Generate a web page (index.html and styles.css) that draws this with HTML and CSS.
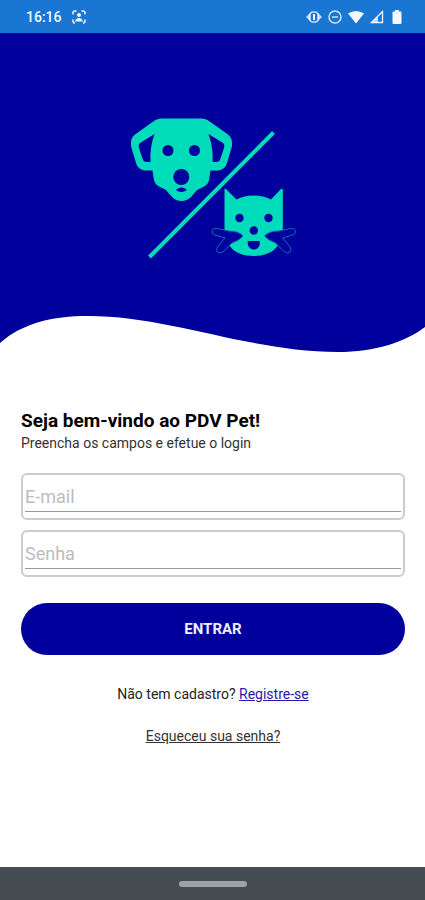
FILE: index.html
```html
<!DOCTYPE html>
<html lang="pt-BR">
<head>
  <meta charset="utf-8">
  <meta name="viewport" content="width=device-width, initial-scale=1">
  <title>PDV Pet</title>
  <link rel="stylesheet" href="styles.css">
</head>
<body>
  <div class="status-bar">
    <div class="status-left">
      <span>16:16</span>
      <svg width="14" height="14" viewBox="0 0 14 14" fill="none" stroke="currentColor" stroke-width="1.5">
        <path d="M1 4.500V3Q1 1 3 1h1.500M9.500 1H11q2 0 2 2v1.500M1 9.500V11q0 2 2 2M13 9.500V11q0 2-2 2"/>
        <circle cx="7" cy="5" r="2" fill="currentColor" stroke="none"/>
        <path d="M3 11.500Q4 8 7 8t4 3.500z" fill="currentColor" stroke="none"/>
      </svg>
    </div>
    <div class="status-right">
      <svg width="16" height="14" viewBox="0 0 16 14">
        <path d="M0 7l4-4v8zM16 7l-4-4v8z" fill="currentColor" opacity=".8"/>
        <rect x="4" y="2" width="8" height="10" rx="3" fill="none" stroke="currentColor" stroke-width="1.500" opacity=".8"/>
        <path d="M8 4v6" stroke="currentColor" stroke-width="2"/>
      </svg>
      <svg width="14" height="14" viewBox="0 0 14 14" fill="none" stroke="currentColor" stroke-width="1.500" opacity=".85">
        <circle cx="7" cy="7" r="6"/><path d="M4 7h6"/>
      </svg>
      <svg width="16" height="14" viewBox="0 0 16 14" fill="currentColor"><path d="M0 3.500Q8-1.500 16 3.500L8 13.500z"/></svg>
      <svg width="14" height="14" viewBox="0 0 14 14"><path d="M1.500 12.500L12.500 1.500v11z" fill="none" stroke="currentColor" stroke-width="1.300"/><path d="M1 13l7-7v7z" fill="currentColor" opacity=".8"/></svg>
      <svg class="battery" width="10" height="14" viewBox="0 0 10 14" fill="currentColor"><path d="M3 0h4v1.500h1.500q1 0 1 1V13q0 1-1 1h-7q-1 0-1-1V2.500q0-1 1-1H3z"/></svg>
    </div>
  </div>

  <header class="hero">
    <svg class="logo" viewBox="128 115 170 146" role="img" aria-label="PDV Pet">
      <path class="mint" fill-rule="evenodd" d="M161 118.500H202Q206 118.500 209 121L228 134.500Q233 138.500 232 146L227 163Q225 170 218 170.500H210.500L209 180Q208 185 203 187L197 190L191 197Q187 201 181.500 201Q176 201 172 197L166 190L160 187Q155 185 154 180L152.500 170.500H145Q138 170 136 163L131 146Q130 138.500 135 134.500L154 121Q157 118.500 161 118.500Z
        M154.500 134L140 143Q138 144.500 139 148L143 160Q144 162 147 162H150.500Q149.500 148 154.500 134Z
        M208.500 134L223 143Q225 144.500 224 148L220 160Q219 162 216 162H212.500Q213.500 148 208.500 134Z"/>
      <g class="navy">
        <circle cx="168" cy="150.500" r="5.500"/><circle cx="194.500" cy="150.500" r="5.500"/>
        <circle cx="181.300" cy="177" r="8"/>
        <path d="M178 188.500Q181.500 186.500 185 188.500L187 190Q181.500 194 175.500 190Z"/>
      </g>
      <path class="slash" d="M149.500 257L273.500 132.500"/>
      <path class="mint" d="M224.500 190Q224.500 188 226 189L236.500 199.500Q244 195.500 253.500 195.500T271 199.500L281 189Q282.800 188 282.800 190V231Q280 256 253.600 256T224.500 231Z"/>
      <g class="whisker">
        <path d="M243 236Q239 231 229 231L217 228.500Q212 228 212 232Q212 234 215 235L225 238L218 246Q215 250 218 252.500Q221 254 224 251L232 243Q240 240 243 236Z"/>
        <path d="M264.500 236Q268.500 231 278.500 231L290.500 228.500Q295.500 228 295.500 232Q295.500 234 292.500 235L282.500 238L289.500 246Q292.500 250 289.500 252.500Q286.500 254 283.500 251L275.500 243Q267.500 240 264.500 236Z"/>
      </g>
      <g class="navy">
        <circle cx="239.500" cy="218" r="4.200"/><circle cx="268.500" cy="218" r="4.200"/>
        <circle cx="253.800" cy="230.500" r="4.200"/>
        <path d="M247.500 241H260Q260 249.500 253.800 249.500T247.500 241Z"/>
      </g>
    </svg>
    <svg class="wave" viewBox="0 0 425 40" preserveAspectRatio="none" aria-hidden="true">
      <path d="M0 30C23 10 52 3 88 3C170 3 250 39 338 39C375 39 405 29 425 14V40H0Z"/>
    </svg>
  </header>

  <main class="content">
    <h1>Seja bem-vindo ao PDV Pet!</h1>
    <p class="subtitle">Preencha os campos e efetue o login</p>
    <form>
      <div class="field"><input type="email" placeholder="E-mail" aria-label="E-mail"></div>
      <div class="field"><input type="password" placeholder="Senha" aria-label="Senha"></div>
      <button type="button">ENTRAR</button>
    </form>
    <p class="note">Não tem cadastro? <a class="register" href="#registro">Registre-se</a></p>
    <p class="note"><a class="forgot" href="#senha">Esqueceu sua senha?</a></p>
  </main>

  <div class="nav-bar"><div class="handle"></div></div>
</body>
</html>
```
FILE: styles.css
```css
* {
  box-sizing: border-box;
}

body {
  margin: 0;
  min-height: 100vh;
  display: flex;
  flex-direction: column;
  background: #fff;
  color: #111;
  font-family: Roboto, "Liberation Sans", sans-serif;
}

svg {
  display: block;
}

.status-bar {
  height: 33px;
  padding: 0 23px 0 26px;
  display: flex;
  align-items: center;
  justify-content: space-between;
  background: #1976d2;
  color: #f2f8ff;
  font-size: 14px;
  font-weight: 500;
}

.status-left {
  display: flex;
  align-items: center;
  gap: 10px;
}

.status-right {
  display: flex;
  align-items: center;
  gap: 6px;
}

.battery {
  margin-left: 2px;
}

.hero {
  display: flex;
  flex-direction: column;
  align-items: center;
  padding-top: 82px;
  background: #00009c;
}

.logo {
  width: 170px;
  height: 146px;
}

.mint {
  fill: #00dcb9;
}

.navy {
  fill: #00009c;
}

.slash {
  stroke: #00dcb9;
  stroke-width: 4;
}

.whisker {
  fill: #00009c;
  stroke: #0a6fb4;
  stroke-width: 1;
}

.wave {
  width: 100%;
  height: 40px;
  margin-top: 52px;
  fill: #fff;
}

.content {
  flex: 1;
  padding: 56px 20px 24px 21px;
}

h1 {
  margin: 0;
  font-size: 19px;
  line-height: 24px;
  font-weight: 700;
  color: #000;
}

.subtitle {
  margin: 0 0 20px;
  font-size: 14px;
  line-height: 20px;
  color: #333;
}

.field {
  height: 47px;
  margin-bottom: 10px;
  padding: 2px 2px 6px;
  border: 2px solid #ccc;
  border-radius: 6px;
}

input {
  display: block;
  width: 100%;
  height: 100%;
  padding: 4px 0 0;
  border: 0;
  border-bottom: 1px solid #999;
  outline: 0;
  background: transparent;
  color: #222;
  font: 18px Roboto, "Liberation Sans", sans-serif;
}

input::placeholder {
  color: #bdbdbd;
}

button {
  display: block;
  width: 100%;
  height: 52px;
  margin: 26px 0 29px;
  border: 0;
  border-radius: 26px;
  background: #00009c;
  color: #eeeeff;
  font: 700 15px Roboto, "Liberation Sans", sans-serif;
}

.note {
  margin: 0 0 22px;
  font-size: 14px;
  line-height: 20px;
  text-align: center;
  color: #222;
}

.register {
  color: #2a1aa8;
}

.forgot {
  color: #333;
}

.nav-bar {
  height: 33px;
  display: flex;
  align-items: center;
  justify-content: center;
  background: #454d53;
}

.handle {
  width: 68px;
  height: 6px;
  border-radius: 3px;
  background: #9da2a6;
}
```
